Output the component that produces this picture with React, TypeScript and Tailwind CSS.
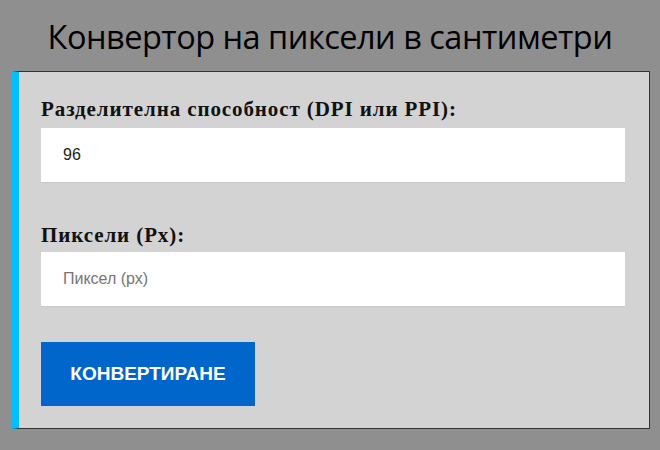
export default function App() {
  return (
    <div className="min-h-[450px] w-[660px] bg-[#8f8f8f] pt-[16px]">
      <h1 className="text-center text-[32.5px] leading-[42px] text-black font-['Open_Sans',sans-serif] tracking-[-0.5px]">
        Конвертор на пиксели в сантиметри
      </h1>
      <div className="ml-[12px] mt-[13px] w-[638px] h-[358px] bg-[#d3d3d3] border border-[#333] border-l-[7px] border-l-[#00bfff] pl-[22px] pr-[24px] pt-[25px]">
        <label className="block text-[21px] leading-[25px] font-bold tracking-[0.9px] text-[#111] font-['Liberation_Serif',serif]">
          Разделителна способност (DPI или PPI):
        </label>
        <input
          type="text"
          defaultValue="96"
          className="mt-[6px] block w-full h-[55px] bg-white border-b border-[#c8c8c8] px-[22px] text-[16px] text-[#222] font-['Liberation_Sans',sans-serif] outline-none"
        />
        <label className="mt-[40px] block text-[21px] leading-[25px] font-bold tracking-[0.9px] text-[#111] font-['Liberation_Serif',serif]">
          Пиксели (Px):
        </label>
        <input
          type="text"
          placeholder="Пиксел (рх)"
          className="mt-[4px] block w-full h-[55px] bg-white border-b border-[#c8c8c8] px-[22px] text-[16px] text-[#222] placeholder:text-[#757575] font-['Liberation_Sans',sans-serif] outline-none"
        />
        <button className="mt-[35px] block w-[214px] h-[64px] bg-[#0066cc] text-white text-[19px] font-bold uppercase font-['Liberation_Sans',sans-serif]">
          Конвертиране
        </button>
      </div>
    </div>
  );
}
